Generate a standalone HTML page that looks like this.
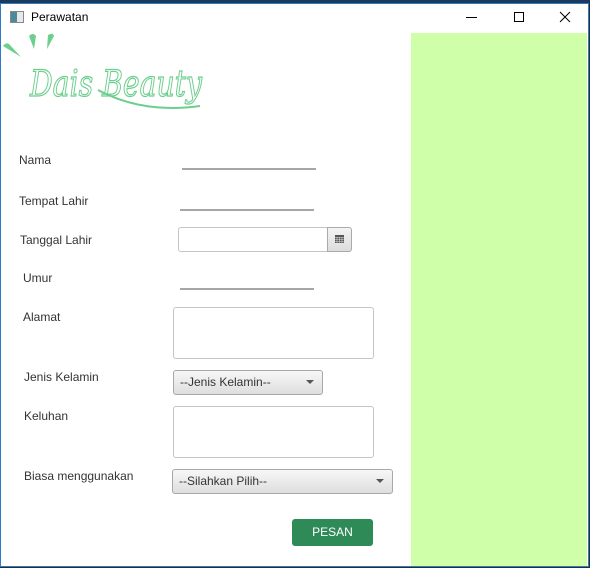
<!DOCTYPE html>
<html><head><style>
*{margin:0;padding:0;box-sizing:border-box}
body{width:590px;height:568px;background:#2b2b2b;position:relative;overflow:hidden;font-family:"Liberation Sans",sans-serif;font-size:12px;color:#222}
.a{position:absolute}
.win{left:0;top:3px;width:589px;height:564px;background:#fff;border:1px solid #2d7bc9}
.lbl{position:absolute;font-size:12px;color:#333}
.ul{position:absolute;height:2px;background:#a6a6a6}
.box{position:absolute;border:1px solid #c4c4c4;border-radius:3px;background:#fff}
.cb{position:absolute;border:1px solid #a8a8a8;border-radius:3px;background:linear-gradient(#f7f7f7,#dedede);font-size:12px;color:#333;padding:0 0 0 6px}
.arr{position:absolute;right:8px;top:9px;width:0;height:0;border-left:4px solid transparent;border-right:4px solid transparent;border-top:4px solid #555}
</style></head><body>
<div class="a" style="left:0;top:0;width:590px;height:3px;background:#1e3a5a"></div>
<div class="a win"></div>
<div class="a" style="left:10px;top:11px;width:14px;height:12px;border:1px solid #888;background:linear-gradient(90deg,#4a8a9a 50%,#e8e8e8 50%)"></div>
<div class="a" style="left:31px;top:10px;font-size:12px;color:#000">Perawatan</div>
<div class="a" style="left:466px;top:17px;width:11px;height:1px;background:#000"></div>
<div class="a" style="left:514px;top:12px;width:10px;height:10px;border:1px solid #000"></div>
<svg class="a" style="left:559px;top:11px" width="12" height="12"><path d="M1 1L11 11M11 1L1 11" stroke="#000" stroke-width="1"/></svg>
<div class="a" style="left:411px;top:33px;width:176px;height:533px;background:#cfffa8"></div>
<svg class="a" style="left:0;top:30px" width="210" height="85">
<g fill="#6ccf8d"><path d="M29 6q4-4 7 0l-2 13z"/><path d="M48 5q5-3 6 1l-7 13z"/><path d="M3 16q3-4 6-2l12 13z"/></g>
<text x="30" y="66" textLength="172" lengthAdjust="spacingAndGlyphs" font-family="DejaVu Serif,serif" font-style="italic" font-size="36" fill="none" stroke="#6ccf8d" stroke-width="1.2">Dais Beauty</text>
<path d="M98 60q45 24 102 16" stroke="#6ccf8d" stroke-width="2" fill="none"/>
</svg>
<div class="lbl" style="left:19px;top:153px">Nama</div>
<div class="ul" style="left:182px;top:168px;width:134px"></div>
<div class="lbl" style="left:19px;top:194px">Tempat Lahir</div>
<div class="ul" style="left:180px;top:209px;width:134px"></div>
<div class="lbl" style="left:20px;top:233px">Tanggal Lahir</div>
<div class="box" style="left:178px;top:227px;width:152px;height:25px;border-radius:3px 0 0 3px"></div>
<div class="a" style="left:327px;top:227px;width:25px;height:25px;border:1px solid #aaa;border-radius:0 3px 3px 0;background:linear-gradient(#f4f4f4,#ddd)"></div>
<svg class="a" style="left:335px;top:235px" width="9" height="8"><rect width="9" height="8" fill="#555"/><path d="M0 2.5h9M0 4.5h9M0 6.5h9M2 2v6M4.5 2v6M7 2v6" stroke="#ddd" stroke-width=".6"/></svg>
<div class="lbl" style="left:23px;top:271px">Umur</div>
<div class="ul" style="left:180px;top:288px;width:134px"></div>
<div class="lbl" style="left:23px;top:310px">Alamat</div>
<div class="box" style="left:173px;top:307px;width:201px;height:52px"></div>
<div class="lbl" style="left:24px;top:370px">Jenis Kelamin</div>
<div class="cb" style="left:173px;top:370px;width:150px;height:25px;line-height:23px">--Jenis Kelamin--<div class="arr"></div></div>
<div class="lbl" style="left:24px;top:409px">Keluhan</div>
<div class="box" style="left:173px;top:406px;width:201px;height:52px"></div>
<div class="lbl" style="left:24px;top:469px">Biasa menggunakan</div>
<div class="cb" style="left:172px;top:469px;width:221px;height:25px;line-height:23px">--Silahkan Pilih--<div class="arr"></div></div>
<div class="a" style="left:292px;top:519px;width:81px;height:27px;background:#2e8b57;border-radius:3px;color:#fff;text-align:center;line-height:27px;font-size:12px">PESAN</div>
</body></html>
